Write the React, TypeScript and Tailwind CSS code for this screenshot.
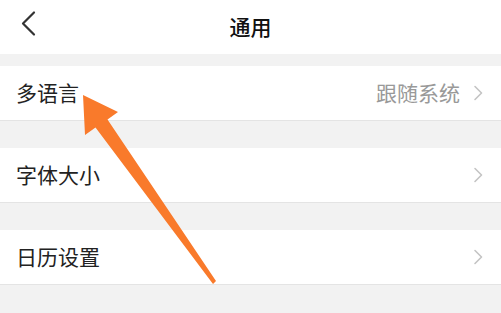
import React from 'react'

const font = { fontFamily: '"Noto Sans CJK SC", "Noto Sans", sans-serif' }

function Chevron() {
  return (
    <svg width="10" height="16" viewBox="0 0 10 16" className="shrink-0">
      <path d="M2 1.5 L8.5 8 L2 14.5" fill="none" stroke="#c4c4c4" strokeWidth="1.6" strokeLinecap="round" strokeLinejoin="round" />
    </svg>
  )
}

function Row({ label, value }: { label: string; value?: string }) {
  return (
    <div className="flex h-[55px] items-center justify-between border-b border-[#e4e4e4] bg-white pl-4 pr-[18px]">
      <span className="text-[21px] text-[#222]">{label}</span>
      <div className="flex items-center gap-[13px]">
        {value && <span className="text-[21px] text-[#999]">{value}</span>}
        <Chevron />
      </div>
    </div>
  )
}

export default function App() {
  return (
    <div className="relative h-[313px] w-[501px] overflow-hidden bg-[#f2f2f2]" style={font}>
      {/* Header */}
      <div className="relative flex h-[54px] items-center justify-center bg-white">
        <svg width="20" height="28" viewBox="0 0 20 28" className="absolute left-[18px] top-[10px]">
          <path d="M16 2.5 L5 13.5 L16 24.5" fill="none" stroke="#333" strokeWidth="2.2" strokeLinecap="round" strokeLinejoin="round" />
        </svg>
        <span className="text-[21px] font-medium text-[#111]">通用</span>
      </div>

      <div className="h-[12px]" />
      <Row label="多语言" value="跟随系统" />
      <div className="h-[27px]" />
      <Row label="字体大小" />
      <div className="h-[27px]" />
      <Row label="日历设置" />

      {/* Annotation arrow */}
      <svg className="pointer-events-none absolute left-0 top-0" width="501" height="313" viewBox="0 0 501 313">
        <polygon
          points="83,95 118,112 107.5,119.5 216,281 213,284 95.5,127.5 85,135"
          fill="#f97a2b"
        />
      </svg>
    </div>
  )
}
